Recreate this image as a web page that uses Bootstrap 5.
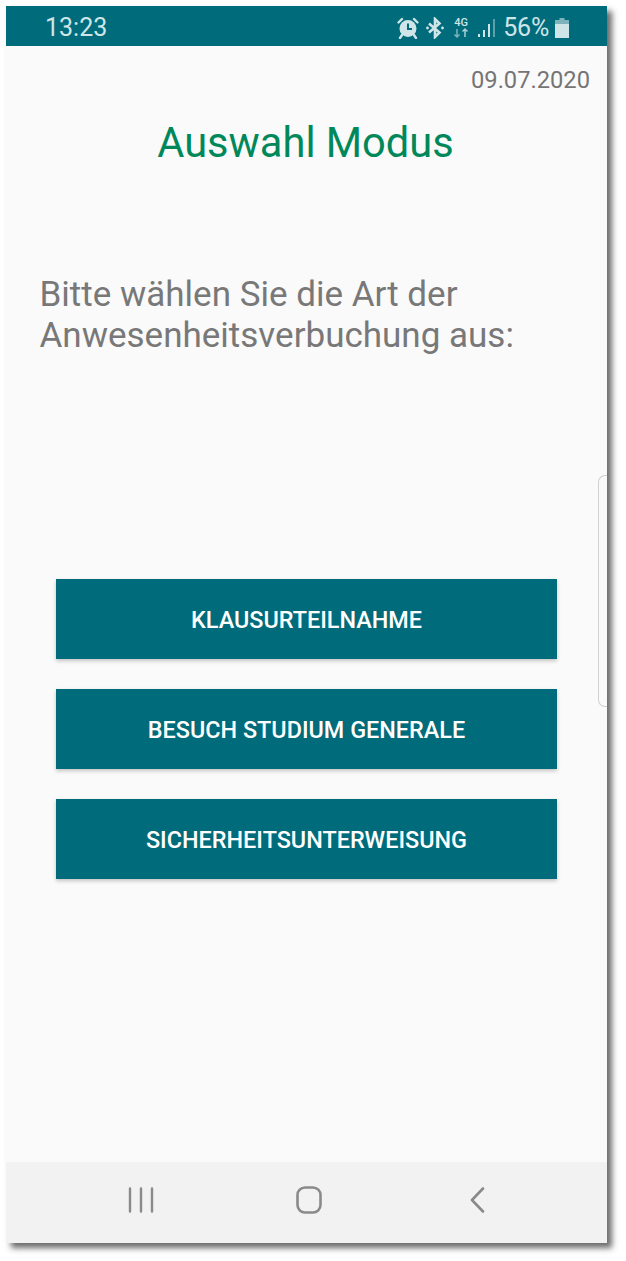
<!DOCTYPE html>
<html lang="de">
<head>
<meta charset="utf-8">
<title>Auswahl Modus</title>
<link href="https://cdn.jsdelivr.net/npm/bootstrap@5.3.0/dist/css/bootstrap.min.css" rel="stylesheet">
<style>
html,body{height:1261px;background:#fff;overflow:hidden}
body{font-family:Roboto,"Liberation Sans",sans-serif;padding:6px 19px 18px 6px}
.phone{position:relative;width:601px;height:1237px;background:#fafafa;box-shadow:5px 5px 6px rgba(50,50,50,.72)}
.statusbar{height:40px;background:#006c7b;color:#cfe5e8;padding:3px 38px 0 39px;font-size:25px;line-height:37px}
.status-icons{gap:6px}
.pct{font-size:25px;letter-spacing:-.2px}
.date-line{font-size:23.7px;line-height:28px;color:#757575;padding:20px 17px 0 0}
.page-title{font-size:41.6px;line-height:46px;color:#00885a;font-weight:400;margin:26px 0 0;padding-right:2px}
.lead-text{font-size:35px;line-height:41px;color:#787878;margin:108px 0 0;padding-left:33.500px}
.actions{padding:223px 50px 0;gap:30px}
.act-btn{height:80px;border:0;border-radius:0;background:#006c7b;color:#fff;font-size:23.4px;font-weight:500;padding-top:10px;box-shadow:0 2px 4px rgba(0,0,0,.22)}
.act-btn:hover{background:#006c7b;color:#fff}
.edge-handle{position:absolute;right:0;top:469px;width:9px;height:232px;border:1px solid #d0d0d0;border-right:0;border-radius:7px 0 0 7px}
.navbar-sys{height:81px;background:#f2f2f2;padding:0 121px 6px 122px}
.back-ico{margin-left:6px}
</style>
</head>
<body>
<div class="phone d-flex flex-column">
  <div class="statusbar d-flex justify-content-between align-items-center">
    <span>13:23</span>
    <div class="status-icons d-flex align-items-center">
      <svg width="22" height="22" viewBox="0 0 22 22" aria-hidden="true"><path d="M1.5 5.500 5 2M20.500 5.500 17 2" stroke="#cfe5e8" stroke-width="2.400" stroke-linecap="round"/><circle cx="11" cy="11.500" r="8.500" fill="#cfe5e8"/><path d="M11 6.500v5.500h4" fill="none" stroke="#006c7b" stroke-width="2"/><path d="M5 18l-2 3M17 18l2 3" stroke="#cfe5e8" stroke-width="2.400" stroke-linecap="round"/></svg>
      <svg width="20" height="22" viewBox="0 0 20 22" aria-hidden="true"><path d="M4 6.500 14.500 15.500 10 20V2l4.500 4.500L4 15.500" fill="none" stroke="#cfe5e8" stroke-width="2.600"/><circle cx="2.500" cy="11" r="1.400" fill="#cfe5e8"/><circle cx="17.500" cy="11" r="1.400" fill="#cfe5e8"/></svg>
      <svg width="20" height="24" viewBox="0 0 20 24" aria-hidden="true"><text x="10" y="10" font-family="Roboto,sans-serif" font-size="11" font-weight="500" text-anchor="middle" fill="#cfe5e8">4G</text><path d="M6 13v8M3.500 18.500 6 21l2.500-2.500" fill="none" stroke="#7fb3bb" stroke-width="1.500"/><path d="M14 21v-8M11.500 15.500 14 13l2.500 2.500" fill="none" stroke="#a9cdd2" stroke-width="1.500"/></svg>
      <svg width="20" height="20" viewBox="0 0 20 20" aria-hidden="true"><rect x="1" y="16" width="2" height="3" fill="#cfe5e8"/><rect x="6" y="12" width="2" height="7" fill="#cfe5e8"/><rect x="11" y="6" width="2" height="13" fill="#cfe5e8"/><rect x="16" y="1" width="2" height="18" fill="#5f9fa9"/></svg>
      <span class="pct">56%</span>
      <svg width="14" height="22" viewBox="0 0 14 22" aria-hidden="true"><path d="M4.500 1h5v2H14v4H0V3h4.500z" fill="#7fb3bb"/><rect x="0" y="7" width="14" height="14" fill="#cfe5e8"/></svg>
    </div>
  </div>
  <div class="date-line text-end">09.07.2020</div>
  <h1 class="page-title text-center">Auswahl Modus</h1>
  <p class="lead-text">Bitte wählen Sie die Art der<br>Anwesenheitsverbuchung aus:</p>
  <div class="actions d-flex flex-column">
    <button type="button" class="btn act-btn">KLAUSURTEILNAHME</button>
    <button type="button" class="btn act-btn">BESUCH STUDIUM GENERALE</button>
    <button type="button" class="btn act-btn">SICHERHEITSUNTERWEISUNG</button>
  </div>
  <div class="edge-handle"></div>
  <div class="navbar-sys d-flex justify-content-between align-items-center mt-auto">
    <svg width="26" height="26" viewBox="0 0 26 26" aria-hidden="true"><path d="M2 1.500v23M13 1.500v23M24 1.500v23" stroke="#8a8a8a" stroke-width="2.400" stroke-linecap="round"/></svg>
    <svg width="26" height="28" viewBox="0 0 26 28" aria-hidden="true"><rect x="1.500" y="1.500" width="23" height="25" rx="7.500" fill="none" stroke="#8a8a8a" stroke-width="2.600"/></svg>
    <svg class="back-ico" width="16" height="26" viewBox="0 0 16 26" aria-hidden="true"><path d="M13 1.500 2 13l11 11.500" fill="none" stroke="#8a8a8a" stroke-width="2.600" stroke-linecap="round" stroke-linejoin="round"/></svg>
  </div>
</div>
<script src="https://cdn.jsdelivr.net/npm/bootstrap@5.3.0/dist/js/bootstrap.bundle.min.js"></script>
</body>
</html>
